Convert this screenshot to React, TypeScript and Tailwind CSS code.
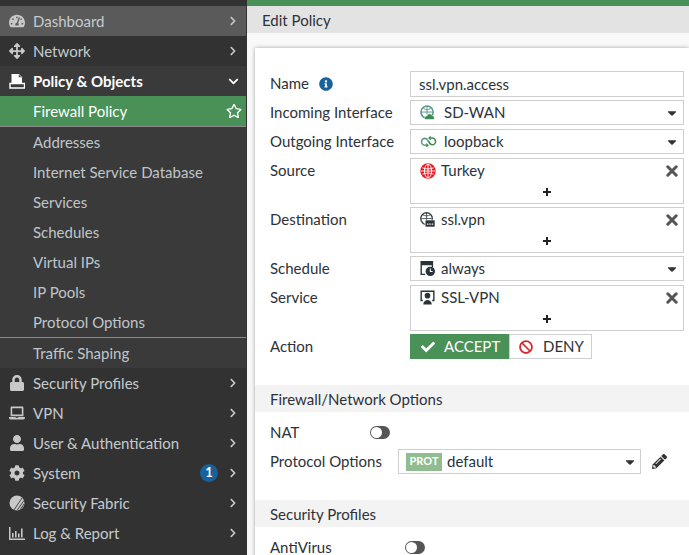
import React from 'react';
import { FaChevronRight, FaChevronDown, FaRegStar, FaLock, FaLaptop, FaUser, FaCog, FaTachometerAlt, FaArrowsAlt, FaCheck, FaBan, FaCaretDown, FaPencilAlt, FaInfoCircle } from 'react-icons/fa';

const PolicyIcon = () => (
  <svg viewBox="0 0 16 16" className="w-4 h-4">
    <path d="M2.5 1h7l3.5 3.5V10H2.5z" fill="#fff" />
    <path d="M9.5 1v3.5H13z" fill="#3a3a3a" stroke="#fff" strokeWidth="0.6" />
    <path d="M1 10.5h14.5V15H1z" fill="none" stroke="#fff" strokeWidth="1.4" />
  </svg>
);

const FabricIcon = () => (
  <svg viewBox="0 0 16 16" className="w-4 h-4">
    <circle cx="8" cy="8" r="7.5" fill="#c8c8c8" />
    <path d="M5 15 13 3M8 15.5l7-10M11 15l4-6" stroke="#333" strokeWidth="0.9" />
  </svg>
);

const LogIcon = () => (
  <svg viewBox="0 0 16 16" className="w-4 h-4" fill="#c8c8c8">
    <path d="M0 2h1.5v11.5H16V15H0z" />
    <path d="M3 8h1.6v4.500H3zM6 6h1.6v6.500H6zM9 8.500h1.6v4H9zM12 3.500h1.6v9H12z" />
  </svg>
);

const SdwanIcon = () => (
  <svg viewBox="0 0 16 16" className="h-[15px] w-[15px]">
    <circle cx="7.5" cy="7.5" r="6.5" fill="none" stroke="#5c9a8e" strokeWidth="1.7" />
    <path d="M1.5 7.500h12M7.500 1v9M3.500 3.500c3 2 5 2 8 0" fill="none" stroke="#5c9a8e" strokeWidth="1" />
    <path d="M5.500 15.500c-1.500-2 0-4 2-4 .5-2.500 4-3 5-.5 2 0 3.500 2.500 2.500 4.500z" fill="#3f8a50" stroke="#fff" strokeWidth="0.6" />
  </svg>
);

const LoopIcon = () => (
  <svg viewBox="0 0 18 14" className="h-[13px] w-[17px]" fill="none" strokeWidth="1.7">
    <path d="M6.500 11H5.200A3.700 3.700 0 0 1 5.200 3.600c2.800 0 3.200 2.500 4 3.800" stroke="#5c9a8e" />
    <path d="M9 6.600c.8 1.500 1.300 3.900 4 3.900a3.600 3.600 0 0 0 0-7.200h-1.500" stroke="#3f8a50" />
    <path d="M6.500 8.500v5l3-2.500zM11.500 .8v5l-3-2.500z" fill="#3f8a50" stroke="none" />
  </svg>
);

const GeoIcon = () => (
  <svg viewBox="0 0 16 16" className="h-[16px] w-[16px]">
    <circle cx="8" cy="8" r="7.700" fill="#f0101c" />
    <ellipse cx="8" cy="8" rx="3.600" ry="6.800" fill="none" stroke="#fff" strokeWidth="1" />
    <path d="M2.200 4.800c3.500 1.500 8 1.500 11.600 0M1 8h14M2.200 11.200c3.500-1.500 8-1.500 11.600 0M8 1v14" fill="none" stroke="#fff" strokeWidth="0.9" />
  </svg>
);

const VpnIcon = () => (
  <svg viewBox="0 0 16 16" className="h-[15px] w-[15px]">
    <circle cx="7" cy="7" r="6.200" fill="none" stroke="#3a4048" strokeWidth="1.500" />
    <path d="M1.500 7h11M7 1v12M3 3c2.500 1.500 5.500 1.500 8 0" fill="none" stroke="#3a4048" strokeWidth="0.9" />
    <path d="M5.500 8.500H16V16H5.500z" fill="#2c3239" stroke="#fff" strokeWidth="0.7" />
    <path d="M7.500 13h1.500M10 13h1.500M12.500 13H14" stroke="#fff" strokeWidth="1.300" />
  </svg>
);

const ScheduleIcon = () => (
  <svg viewBox="0 0 16 16" className="h-[15px] w-[15px]">
    <path d="M.5 0H14v7h-1.500V4.500H2v9h3.500V15H.5z" fill="#2c3239" />
    <circle cx="11" cy="11" r="5" fill="#2c3239" />
    <path d="M11 8v3.300h2.500" fill="none" stroke="#fff" strokeWidth="1.100" />
  </svg>
);

const ServiceIcon = () => (
  <svg viewBox="0 0 16 16" className="h-[15px] w-[15px]">
    <path d="M.5 .5h15V12H13v-1.500h1V2H2v8.500h1V12H.5z" fill="#2c3239" />
    <circle cx="8" cy="6" r="3" fill="#2c3239" />
    <path d="M3.500 15.500c0-6.500 9-6.500 9 0z" fill="#2c3239" />
  </svg>
);

const CloseIcon = () => (
  <svg viewBox="0 0 12 12" className="h-[12px] w-[12px]">
    <path d="M1.800 1.800l8.400 8.400M10.200 1.800l-8.400 8.400" stroke="#555" strokeWidth="3" strokeLinecap="round" />
  </svg>
);

const PlusIcon = () => (
  <svg viewBox="0 0 8 8" className="h-[8px] w-[8px]">
    <path d="M4 0v8M0 4h8" stroke="#222" strokeWidth="2" />
  </svg>
);

const Toggle = () => (
  <span className="flex h-[13px] w-[20px] items-center rounded-full bg-[#555] pl-[1px]">
    <span className="h-[11px] w-[11px] rounded-full bg-white" />
  </span>
);

const TopItem = ({ icon, label, badge, className = '' }: { icon: React.ReactNode; label: string; badge?: string; className?: string }) => (
  <div className={`flex h-[30px] items-center pl-[9px] pr-[8px] ${className}`}>
    <span className="flex w-[24px] justify-start text-[#c8c8c8]">{icon}</span>
    <span className="flex-1 text-[15px] text-[#c4cbd0]">{label}</span>
    {badge && (
      <span className="mr-[10px] flex h-[18px] w-[18px] items-center justify-center rounded-full bg-[#1a6199] text-[13px] font-bold text-white">{badge}</span>
    )}
    <FaChevronRight className="h-[10px] w-[10px] text-[#c8c8c8]" />
  </div>
);

const SubItem = ({ label }: { label: string }) => (
  <div className="flex h-[30px] items-center pl-[33px] text-[15px] text-[#bfc6cb]">{label}</div>
);

const Row = ({ label, children, className = '' }: { label: React.ReactNode; children: React.ReactNode; className?: string }) => (
  <div className={`flex items-start ${className}`}>
    <div className="flex h-[25px] w-[140px] items-center text-[15px] text-[#2c3239]">{label}</div>
    {children}
  </div>
);

const SelectBox = ({ icon, text, gap = 'w-[24px]' }: { icon: React.ReactNode; text: string; gap?: string }) => (
  <div className="flex h-[25px] w-[274px] items-center border border-[#cfcfcf] pl-[9px] pr-[4px] text-[15px] text-[#2c3239]">
    <span className={`flex items-center ${gap}`}>{icon}</span>
    <span className="flex-1">{text}</span>
    <FaCaretDown className="h-[14px] w-[14px] text-[#333]" />
  </div>
);

const MultiBox = ({ icon, text }: { icon: React.ReactNode; text: string }) => (
  <div className="flex h-[46px] w-[274px] flex-col border border-[#cfcfcf] text-[15px] text-[#2c3239]">
    <div className="flex h-[23px] items-center pl-[9px] pr-[5px]">
      <span className="flex w-[21px] items-center">{icon}</span>
      <span className="flex-1">{text}</span>
      <CloseIcon />
    </div>
    <div className="flex flex-1 items-center justify-center pb-[1px]">
      <PlusIcon />
    </div>
  </div>
);

const SectionHead = ({ text, className = '' }: { text: string; className?: string }) => (
  <div className={`flex h-[27px] items-center bg-[#f3f3f3] pl-[15px] pt-[1px] text-[15px] text-[#2c3239] ${className}`}>{text}</div>
);

export default function App() {
  return (
    <div className="flex h-[555px] w-[689px] overflow-hidden bg-white font-['Lato',sans-serif]">
      <aside className="w-[247px] shrink-0 bg-[#323232] pr-[1px]">
        <div className="h-[6px]" />
        <TopItem className="bg-[#5a5a5a]" icon={<FaTachometerAlt className="h-4 w-4" />} label="Dashboard" />
        <TopItem icon={<FaArrowsAlt className="h-4 w-4" />} label="Network" />
        <div className="flex h-[30px] items-center bg-[#3a3a3a] pl-[9px] pr-[7px]">
          <span className="flex w-[24px]"><PolicyIcon /></span>
          <span className="flex-1 text-[15px] font-bold text-white">Policy &amp; Objects</span>
          <FaChevronDown className="h-[11px] w-[11px] text-white" />
        </div>
        <div className="flex h-[30px] items-center justify-between bg-[#4a9158] pl-[33px] pr-[4px] text-[15px] text-white">
          Firewall Policy
          <FaRegStar className="h-4 w-4" />
        </div>
        <div className="border-y border-[#8a8a8a] bg-[#3a3a3a]">
          <SubItem label="Addresses" />
          <SubItem label="Internet Service Database" />
          <SubItem label="Services" />
          <SubItem label="Schedules" />
          <SubItem label="Virtual IPs" />
          <SubItem label="IP Pools" />
          <SubItem label="Protocol Options" />
        </div>
        <div className="bg-[#3a3a3a]"><SubItem label="Traffic Shaping" /></div>
        <TopItem icon={<FaLock className="h-4 w-4" />} label="Security Profiles" />
        <TopItem icon={<FaLaptop className="h-4 w-4" />} label="VPN" />
        <TopItem icon={<FaUser className="h-4 w-4" />} label="User & Authentication" />
        <TopItem icon={<FaCog className="h-4 w-4" />} label="System" badge="1" />
        <TopItem icon={<FabricIcon />} label="Security Fabric" />
        <TopItem icon={<LogIcon />} label="Log & Report" />
      </aside>
      <main className="flex-1 bg-[#f9f9f9]">
        <div className="h-[6px] bg-[#4a9158]" />
        <div className="flex h-[27px] items-center bg-[#e3e3e3] pl-[15px] pt-[1px] text-[15px] text-[#2c3239]">Edit Policy</div>
        <div className="ml-[8px] mt-[15px] h-[600px] bg-white pt-[23px] shadow-[0_0_4px_rgba(0,0,0,0.35)]">
          <div className="pl-[15px]">
            <Row label={<>Name<FaInfoCircle className="ml-[10px] h-[14px] w-[14px] text-[#1a6199]" /></>} className="mb-[3px]">
              <div className="flex h-[26px] w-[274px] items-center border border-[#cfcfcf] pl-[8px] text-[15px] text-[#2c3239]">ssl.vpn.access</div>
            </Row>
            <Row label="Incoming Interface" className="mb-[4px]"><SelectBox icon={<SdwanIcon />} text="SD-WAN" /></Row>
            <Row label="Outgoing Interface" className="mb-[4px]"><SelectBox icon={<LoopIcon />} text="loopback" /></Row>
            <Row label="Source" className="mb-[3px]"><MultiBox icon={<GeoIcon />} text="Turkey" /></Row>
            <Row label="Destination" className="mb-[3px]"><MultiBox icon={<VpnIcon />} text="ssl.vpn" /></Row>
            <Row label="Schedule" className="mb-[4px]"><SelectBox icon={<ScheduleIcon />} text="always" gap="w-[21px]" /></Row>
            <Row label="Service" className="mb-[3px]"><MultiBox icon={<ServiceIcon />} text="SSL-VPN" /></Row>
            <Row label="Action">
              <div className="flex h-[25px] text-[15px]">
                <div className="flex w-[99px] items-center bg-[#4a9158] pl-[11px] text-white">
                  <FaCheck className="mr-[9px] h-[14px] w-[14px]" />ACCEPT
                </div>
                <div className="flex w-[83px] items-center border border-[#cfcfcf] pl-[9px] text-[#2c3239]">
                  <FaBan className="mr-[10px] h-[14px] w-[14px] text-[#d9262c]" />DENY
                </div>
              </div>
            </Row>
          </div>
          <SectionHead text="Firewall/Network Options" className="mt-[26px]" />
          <div className="pl-[15px]">
            <div className="mt-[8px] flex h-[25px] items-center text-[15px] text-[#2c3239]">
              <span className="w-[100px]">NAT</span>
              <Toggle />
            </div>
            <div className="mt-[4px] flex h-[25px] items-center text-[15px] text-[#2c3239]">
              <span className="w-[128px]">Protocol Options</span>
              <div className="flex h-[25px] w-[243px] items-center border border-[#cfcfcf] pl-[7px] pr-[3px]">
                <span className="mr-[5px] flex h-[18px] w-[36px] items-center justify-center bg-[#8fbd8f] text-[11px] font-bold text-white">PROT</span>
                <span className="flex-1">default</span>
                <FaCaretDown className="h-[14px] w-[14px] text-[#333]" />
              </div>
              <FaPencilAlt className="ml-[11px] h-[15px] w-[15px] text-[#333]" />
            </div>
          </div>
          <SectionHead text="Security Profiles" className="mt-[26px]" />
          <div className="mt-[8px] flex h-[25px] items-center pl-[15px] text-[15px] text-[#2c3239]">
            <span className="w-[135px]">AntiVirus</span>
            <Toggle />
          </div>
        </div>
      </main>
    </div>
  );
}
